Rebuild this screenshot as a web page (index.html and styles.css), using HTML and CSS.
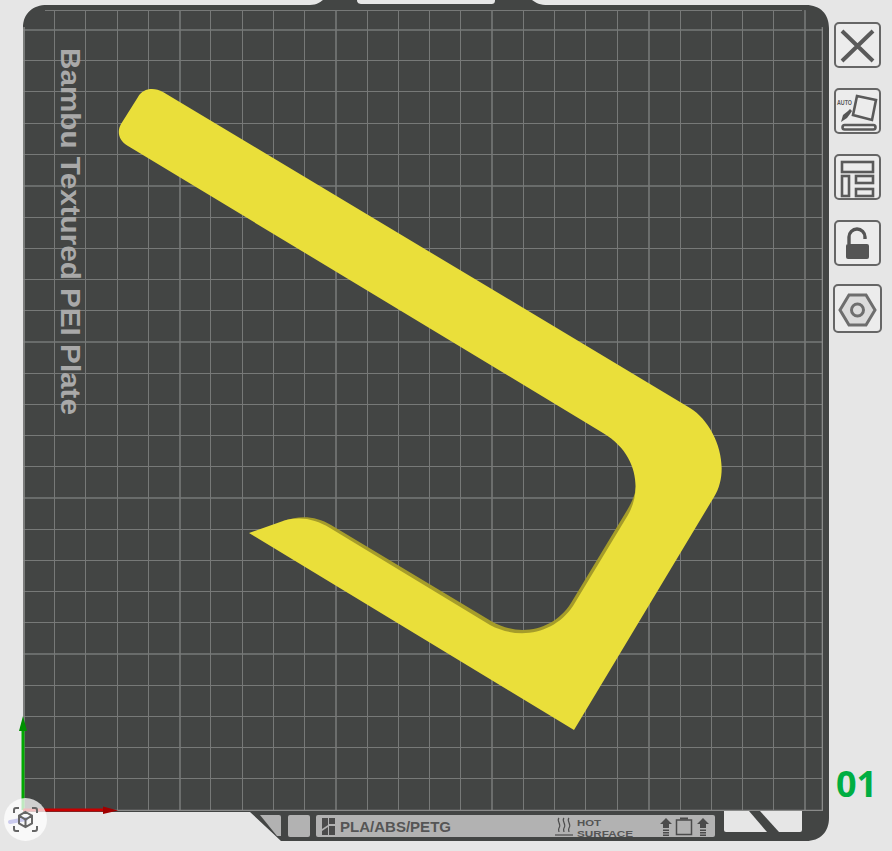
FILE: index.html
```html
<!DOCTYPE html>
<html>
  <head>
    <title>Plate preview</title>
    <link rel="stylesheet" href="styles.css">
  </head>

  <body>
    <div class="viewport">
      <svg class="plate" width="834" height="851" viewBox="0 0 834 851">
        <defs>
          <clipPath id="gridClip">
            <path d="M23 811V30Q23 10 43 10H803Q823 10 823 30V811Z"/>
          </clipPath>
        </defs>

        <!-- bed body with the tabs on top and the chamfer at the bottom -->
        <path class="bed" d="M23 28C23 13 33 5 47 5H310C317 5 320 2 323 0H357C357 3 359 4 362 4H491C494 4 495 3 495 0H532C536 3 540 5 548 5H806C820 5 829 14 829 28V818C829 832 820 841 806 841H281L250 812H23Z"/>

        <g clip-path="url(#gridClip)">
          <path class="grid" d="M54.5 10V811M85.5 10V811M117.5 10V811M148.5 10V811M210.5 10V811M242.5 10V811M273.5 10V811M304.5 10V811M367.5 10V811M398.5 10V811M429.5 10V811M460.5 10V811M523.5 10V811M554.5 10V811M585.5 10V811M617.5 10V811M680.5 10V811M711.5 10V811M742.5 10V811M773.5 10V811"/>
          <path class="grid" d="M45 10.500H802M23 60.5H823M23 91.5H823M23 123.5H823M23 154.5H823M23 217.5H823M23 248.5H823M23 279.5H823M23 310.5H823M23 373.5H823M23 404.5H823M23 435.5H823M23 466.5H823M23 529.5H823M23 560.5H823M23 591.5H823M23 622.5H823M23 685.5H823M23 716.5H823M23 747.5H823M23 778.5H823"/>
          <path class="grid grid-major" d="M180 10V811M336 10V811M492 10V811M649 10V811M805 10V811M23 30H823M23 186H823M23 342H823M23 498H823M23 654H823"/>
          <path class="grid-edge" d="M24 27V810.500H822.500V27"/>
        </g>

        <text class="plate-name" transform="translate(61 48) rotate(90)" textLength="367" lengthAdjust="spacingAndGlyphs">Bambu Textured PEI Plate</text>

        <!-- printed part, the shade sits under its inner edge -->
        <path class="part-shade" d="M283 521C300 515 316 516 331 525L491 621C520 638 554 630 571 603L626 512C632 502 636 494 636 484L650 500L600 640L520 660L300 540Z"/>
        <path class="part" d="M163 92L690 408C716 424 732 468 714 497L574 730L249 533L283 521C300 516 315 519 330 528L490 625C520 641 555 633 573 606L628 515C641 493 640 455 603 433L128 146C118 140 117 131 121 124L138 97C143 88 154 87 163 92Z"/>

        <!-- label strip -->
        <path class="strip" d="M260 815H279Q281 815 281 817V836H277Z"/>
        <rect class="strip" x="288" y="815" width="22" height="22" rx="2"/>
        <rect class="strip" x="316" y="815" width="399" height="22" rx="2"/>
        <path class="strip-icon" d="M322 818H328V825L322 829ZM329 818H335V824L329 824ZM322 831L328 827V835H322ZM329 826H335V835H329Z"/>
        <text class="strip-text" x="340" y="832" textLength="111" lengthAdjust="spacingAndGlyphs">PLA/ABS/PETG</text>
        <path class="strip-line" d="M559 818C556 821 562 824 559 828C558 830 559 831 559 832M564 818C561 821 567 824 564 828C563 830 564 831 564 832M569 818C566 821 572 824 569 828C568 830 569 831 569 832"/>
        <path class="strip-line" d="M555 835H573"/>
        <text class="strip-small" x="577" y="826" textLength="24" lengthAdjust="spacingAndGlyphs">HOT</text>
        <text class="strip-small" x="577" y="836.500" textLength="56" lengthAdjust="spacingAndGlyphs">SURFACE</text>
        <path class="strip-icon" d="M666 818L672 824H669V828H663V824H660ZM663 829.5H669V831H663ZM663 832H669V833.5H663ZM663 834.500H669V836H663Z"/>
        <rect class="strip-frame" x="676.500" y="820" width="15" height="14.500"/>
        <path class="strip-icon" d="M680 817.500H688V819.500H680ZM703 818L709 824H706V828H700V824H697ZM700 829.500H706V831H700ZM700 832H706V833.500H700ZM700 834.500H706V836H700Z"/>

        <!-- cut-outs on the right of the strip -->
        <path class="cutout" d="M724 811H749L767 832H726Q724 832 724 830Z"/>
        <path class="cutout" d="M760 811H802V830Q802 832 800 832H779Z"/>

        <!-- axes -->
        <path class="axis-y" d="M23 730V810"/>
        <path class="axis-y-head" d="M23 716L27 731H19Z"/>
        <path class="axis-x" d="M23 810H104"/>
        <path class="axis-x-head" d="M118 810.500L103 806.500V814Z"/>

        <!-- view widget -->
        <circle class="widget" cx="25.500" cy="819.500" r="21.500"/>
        <path class="widget-stub" d="M26 819L10 822"/>
        <path class="widget-icon" d="M14 813V810Q14 808 16 808H19M32 808H35Q37 808 37 810V813M37 826V829Q37 831 35 831H32M19 831H16Q14 831 14 829V826"/>
        <path class="widget-icon" d="M25.500 812L32 815.700V823.300L25.500 827L19 823.300V815.700ZM19 815.700L25.500 819.500L32 815.700M25.500 819.500V827"/>
      </svg>

      <div class="side">
        <div class="tool-list">
          <button class="tool">
            <svg width="42" height="41" viewBox="0 0 42 41"><path class="tool-stroke" d="M6 6L37 36M37 6L6 36"/></svg>
          </button>
          <button class="tool">
            <svg width="42" height="41" viewBox="0 0 42 41">
              <text class="tool-auto" x="1" y="14" textLength="15" lengthAdjust="spacingAndGlyphs">AUTO</text>
              <path class="tool-thin" d="M21 5L40 9L36 29L17 24Z"/>
              <path class="tool-fill" d="M5 31L7 24L12 20L14 18L16 20L14 23L11 27Z"/>
              <rect class="tool-thin" x="6.500" y="34" width="33" height="4.500" rx="2.200"/>
            </svg>
          </button>
          <button class="tool">
            <svg width="42" height="41" viewBox="0 0 42 41">
              <rect class="tool-thin" x="6" y="5" width="31" height="10"/>
              <rect class="tool-thin" x="6" y="19" width="7" height="20"/>
              <rect class="tool-thin" x="20" y="19" width="17" height="7"/>
              <rect class="tool-thin" x="20" y="32" width="17" height="7"/>
            </svg>
          </button>
          <button class="tool">
            <svg width="42" height="41" viewBox="0 0 42 41">
              <path class="tool-shackle" d="M13 21V14A8 8 0 0 1 29 14V16"/>
              <rect class="tool-fill" x="10" y="21" width="23" height="15" rx="2"/>
            </svg>
          </button>
          <button class="tool tool-nut">
            <svg width="44" height="44" viewBox="0 0 44 44">
              <path class="tool-hex" d="M5 23L14 8H31L40 23L31 38H14Z"/>
              <circle class="tool-hex" cx="22.500" cy="23" r="6"/>
            </svg>
          </button>
        </div>
        <div class="plate-no">01</div>
      </div>
    </div>
  </body>
</html>
```

FILE: styles.css
```css
body{
    margin: 0;
    background-color: #e6e6e6;
}

.viewport{
    display: flex;
    width: 892px;
    height: 851px;
    overflow: hidden;
}

.plate{
    display: block;
    flex: none;
}

.bed{
    fill: #434544;
}

.grid{
    fill: none;
    stroke: #777978;
    stroke-width: 1;
}

.grid-major{
    stroke-width: 1.6;
}

.grid-edge{
    fill: none;
    stroke: #8a8b8a;
    stroke-width: 1.6;
}

.plate-name{
    font-family: "Liberation Sans", sans-serif;
    font-weight: bold;
    font-size: 27px;
    fill: #a9a9a9;
}

.part{
    fill: #eadf3a;
}

.part-shade{
    fill: #a59c2a;
}

.strip{
    fill: #b2b2b2;
}

.strip-icon{
    fill: #4b4b4b;
}

.strip-line{
    fill: none;
    stroke: #4b4b4b;
    stroke-width: 1.2;
}

.strip-frame{
    fill: none;
    stroke: #4b4b4b;
    stroke-width: 1.5;
}

.strip-text{
    font-family: "Liberation Sans", sans-serif;
    font-weight: bold;
    font-size: 14px;
    fill: #555;
}

.strip-small{
    font-family: "Liberation Sans", sans-serif;
    font-weight: bold;
    font-size: 9px;
    fill: #555;
}

.cutout{
    fill: #e6e6e6;
}

.axis-y{
    fill: none;
    stroke: #00a800;
    stroke-width: 3;
}

.axis-y-head{
    fill: #008f00;
}

.axis-x{
    fill: none;
    stroke: #c80000;
    stroke-width: 3;
}

.axis-x-head{
    fill: #a00000;
}

.widget{
    fill: #fff;
    fill-opacity: .75;
}

.widget-stub{
    fill: none;
    stroke: #cbcbee;
    stroke-width: 4;
    stroke-linecap: round;
}

.widget-icon{
    fill: none;
    stroke: #666;
    stroke-width: 2;
}

.side{
    flex: 1;
    display: flex;
    flex-direction: column;
    justify-content: space-between;
    padding: 22px 0 49px 0;
    box-sizing: border-box;
}

.tool-list{
    display: flex;
    flex-direction: column;
    align-items: flex-start;
    gap: 20px;
}

.tool{
    -webkit-appearance: none;
    appearance: none;
    display: block;
    width: 47px;
    height: 46px;
    padding: 0;
    border: 2.5px solid #666;
    border-radius: 5px;
    background-color: #ececec;
}

.tool svg{
    display: block;
}

.tool-nut{
    width: 49px;
    height: 49px;
    margin: -2px 0 0 -1px;
}

.tool-stroke{
    fill: none;
    stroke: #5a5a5a;
    stroke-width: 4;
}

.tool-thin{
    fill: none;
    stroke: #5a5a5a;
    stroke-width: 2.6;
}

.tool-shackle{
    fill: none;
    stroke: #555;
    stroke-width: 3.4;
}

.tool-hex{
    fill: #dcdcdc;
    stroke: #6e6e6e;
    stroke-width: 3;
}

.tool-fill{
    fill: #555;
}

.tool-auto{
    font-family: "Liberation Sans", sans-serif;
    font-weight: bold;
    font-size: 7px;
    fill: #5a5a5a;
}

.plate-no{
    margin-left: 2px;
    font-family: "Open Sans", sans-serif;
    font-weight: bold;
    font-size: 36px;
    line-height: 36px;
    color: #00ae42;
}
```
